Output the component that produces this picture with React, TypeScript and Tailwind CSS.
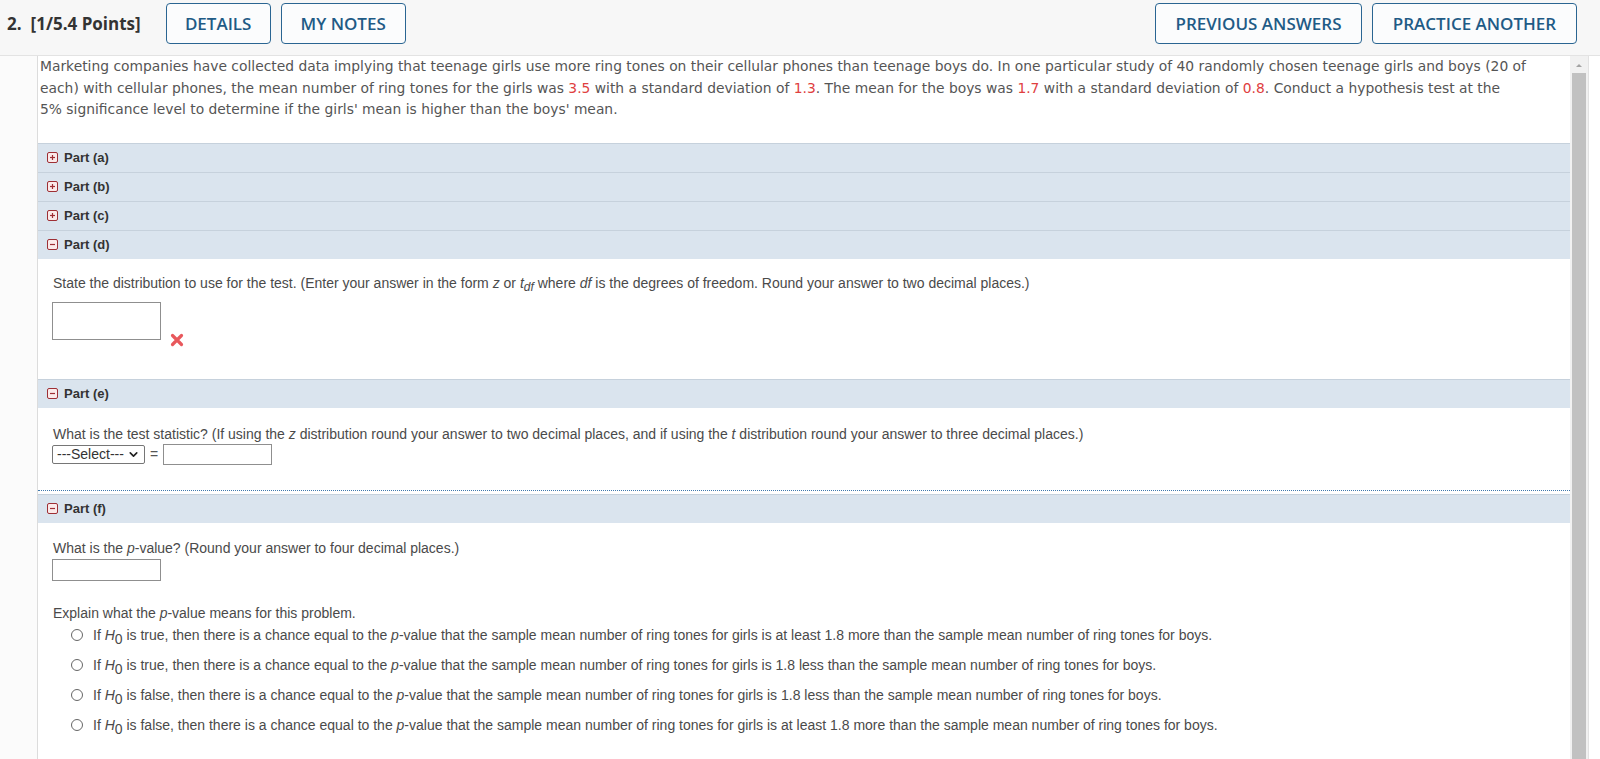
import { ChevronDown } from "lucide-react"

const red = "text-[#e0403f]"

function ToggleIcon({ open }: { open: boolean }) {
  return (
    <svg width="11" height="11" viewBox="0 0 11 11" className="shrink-0">
      <rect x="0.5" y="0.5" width="10" height="10" rx="1.5" fill="#fbeaea" stroke="#9e2f35" />
      <line x1="3" y1="5.5" x2="8" y2="5.5" stroke="#9e2f35" strokeWidth="1.2" />
      {!open && <line x1="5.5" y1="3" x2="5.5" y2="8" stroke="#9e2f35" strokeWidth="1.2" />}
    </svg>
  )
}

function PartHeader({ label, open = false }: { label: string; open?: boolean }) {
  return (
    <div className="flex h-[29px] items-center gap-[6px] border-t border-[#c6d1dc] bg-[#dae4ee] pl-[9px] font-['Liberation_Sans',Arial,sans-serif] text-[13px] font-bold text-[#333]">
      <ToggleIcon open={open} />
      <span>{label}</span>
    </div>
  )
}

function H0() {
  return (
    <span>
      <i>H</i>
      <span className="relative top-[4px]">0</span>
    </span>
  )
}

function WrongMark() {
  return (
    <svg width="14" height="14" viewBox="0 0 14 14">
      <path d="M2.5 2.5 L11.5 11.5 M11.5 2.5 L2.5 11.5" stroke="#e8585c" strokeWidth="3.2" strokeLinecap="round" />
    </svg>
  )
}

const options = [
  ["true", "is at least 1.8 more than"],
  ["true", "is 1.8 less than"],
  ["false", "is 1.8 less than"],
  ["false", "is at least 1.8 more than"]
]

export default function App() {
  return (
    <div className="flex h-[759px] w-[1600px] flex-col overflow-hidden bg-white">
      {/* Header */}
      <div className="h-[56px] shrink-0 border-b border-[#e3e3e3] bg-[#f7f7f7] font-['Open_Sans',sans-serif]">
        <div className="mt-[3px] flex h-[41px] items-center pl-[7px] pr-[23px]">
          <span className="text-[17px] font-bold text-[#333]">2.</span>
          <span className="ml-[9px] text-[17px] font-bold text-[#333]">[1/5.4 Points]</span>
          <div className="ml-[25px] flex gap-[10px]">
            <button className="h-[41px] w-[105px] rounded-[4px] border border-[#2a6592] bg-[#fbfcfd] text-[17px] font-semibold text-[#1f5b86]">
              DETAILS
            </button>
            <button className="h-[41px] w-[125px] rounded-[4px] border border-[#2a6592] bg-[#fbfcfd] text-[17px] font-semibold text-[#1f5b86]">
              MY NOTES
            </button>
          </div>
          <div className="ml-auto flex gap-[10px]">
            <button className="h-[41px] w-[207px] rounded-[4px] border border-[#2a6592] bg-[#fbfcfd] text-[17px] font-semibold text-[#1f5b86]">
              PREVIOUS ANSWERS
            </button>
            <button className="h-[41px] w-[205px] rounded-[4px] border border-[#2a6592] bg-[#fbfcfd] text-[17px] font-semibold text-[#1f5b86]">
              PRACTICE ANOTHER
            </button>
          </div>
        </div>
      </div>

      {/* Body */}
      <div className="flex min-h-0 flex-1">
        <div className="w-[37px] shrink-0 bg-[#fbfbfb]" />

        <div className="min-w-0 flex-1 overflow-hidden border-l border-[#dcdcdc]">
          {/* Question text */}
          <p className="pb-[22px] pl-[2px] pr-[12px] font-['DejaVu_Sans',Verdana,sans-serif] text-[13.85px] leading-[21.5px] text-[#555]">
            Marketing companies have collected data implying that teenage girls use more ring tones on their cellular
            phones than teenage boys do. In one particular study of 40 randomly chosen teenage girls and boys (20 of
            each) with cellular phones, the mean number of ring tones for the girls was <span className={red}>3.5</span>{" "}
            with a standard deviation of <span className={red}>1.3</span>. The mean for the boys was{" "}
            <span className={red}>1.7</span> with a standard deviation of <span className={red}>0.8</span>. Conduct a
            hypothesis test at the
            <br />
            5% significance level to determine if the girls' mean is higher than the boys' mean.
          </p>

          <PartHeader label="Part (a)" />
          <PartHeader label="Part (b)" />
          <PartHeader label="Part (c)" />
          <PartHeader label="Part (d)" open />

          <div className="font-['Liberation_Sans',Arial,sans-serif] text-[14px] leading-[16px] text-[#4a4a4a]">
            {/* Part (d) */}
            <div className="pb-[39px] pl-[15px] pt-[16px]">
              <p>
                State the distribution to use for the test. (Enter your answer in the form <i>z</i> or <i>t</i>
                <sub className="text-[12px]">
                  <i>df</i>
                </sub>{" "}
                where <i>df</i> is the degrees of freedom. Round your answer to two decimal places.)
              </p>
              <div className="mt-[11px] flex items-end gap-[9px]">
                <input className="ml-[-1px] h-[38px] w-[109px] border border-[#8f8f8f] bg-white" />
                <div className="mb-[-7px]">
                  <WrongMark />
                </div>
              </div>
            </div>
          </div>

          <PartHeader label="Part (e)" open />

          <div className="font-['Liberation_Sans',Arial,sans-serif] text-[14px] leading-[16px] text-[#4a4a4a]">
            {/* Part (e) */}
            <div className="border-b border-dotted border-[#3f78ad] pb-[25px] pl-[15px] pt-[18px]">
              <p>
                What is the test statistic? (If using the <i>z</i> distribution round your answer to two decimal places,
                and if using the <i>t</i> distribution round your answer to three decimal places.)
              </p>
              <div className="mt-[2px] flex items-center">
                <div className="ml-[-1px] flex h-[19px] w-[93px] items-center justify-between rounded-[2px] border border-[#767676] bg-white pl-[4px] pr-[4px] text-[14px] text-[#333]">
                  <span>---Select---</span>
                  <ChevronDown size={13} strokeWidth={3} className="text-[#222]" />
                </div>
                <span className="mx-[5px] text-[#555]">=</span>
                <input className="h-[21px] w-[109px] border border-[#8f8f8f] bg-white" />
              </div>
            </div>
            <div className="h-[3px]" />
          </div>

          <PartHeader label="Part (f)" open />

          <div className="pl-[15px] pt-[17px] font-['Liberation_Sans',Arial,sans-serif] text-[14px] leading-[16px] text-[#4a4a4a]">
            <p>
              What is the <i>p</i>-value? (Round your answer to four decimal places.)
            </p>
            <input className="ml-[-1px] mt-[3px] block h-[22px] w-[109px] border border-[#8f8f8f] bg-white" />
            <p className="mt-[24px]">
              Explain what the <i>p</i>-value means for this problem.
            </p>
            <div className="mt-[-1px] flex flex-col pl-[18px]">
              {options.map(([truth, rel], i) => (
                <label key={i} className="flex h-[30px] items-center gap-[10px]">
                  <span className="h-[12px] w-[12px] shrink-0 rounded-full border border-[#666] bg-white" />
                  <span>
                    If <H0 /> is {truth}, then there is a chance equal to the <i>p</i>-value that the sample mean number
                    of ring tones for girls {rel} the sample mean number of ring tones for boys.
                  </span>
                </label>
              ))}
            </div>
          </div>
        </div>

        {/* Scrollbar */}
        <div className="flex w-[18px] shrink-0 flex-col items-center bg-[#f1f1f1]">
          <svg width="8" height="17" viewBox="0 0 8 17" className="shrink-0">
            <path d="M1 11 L4 8 L7 11 Z" fill="#a3a3a3" />
          </svg>
          <div className="w-[14px] flex-1 bg-[#c1c1c1]" />
        </div>
        <div className="w-[12px] shrink-0 border-l border-[#e2e2e2] bg-white" />
      </div>
    </div>
  )
}
